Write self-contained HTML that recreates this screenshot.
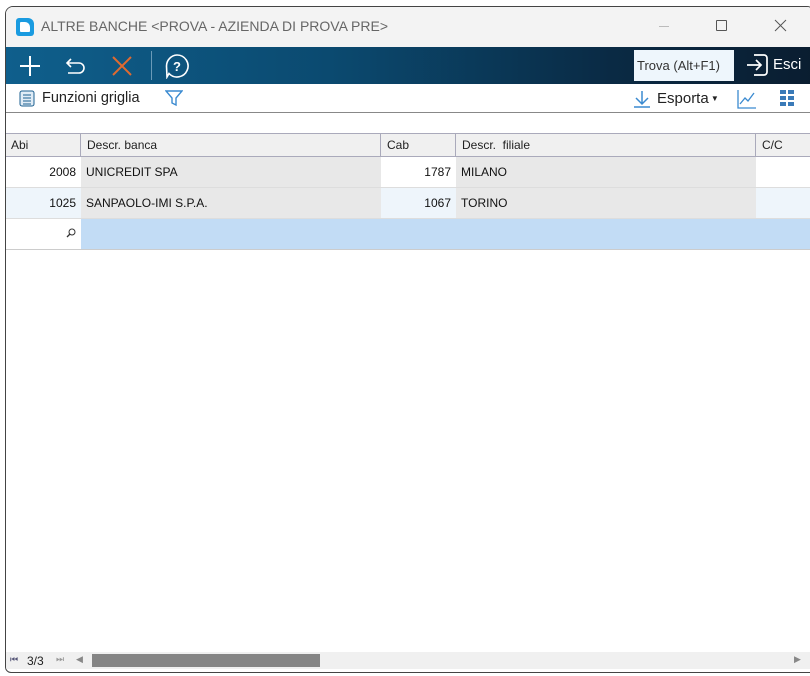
<!DOCTYPE html>
<html><head><style>
*{margin:0;padding:0;box-sizing:border-box}
body{width:810px;height:676px;background:#fff;position:relative;overflow:hidden;font-family:"Liberation Sans",Tahoma,sans-serif}
.win{position:absolute;left:5px;top:6px;width:810px;height:667px;border:1px solid #444;border-radius:8px 8px 0 6px;background:#fff;overflow:hidden}
.title{position:absolute;left:0;top:0;width:100%;height:40px;background:#f3f3f3}
.title .t{position:absolute;left:35px;top:11px;font-size:14px;color:#666}
.logo{position:absolute;left:10px;top:11px;width:18px;height:18px;background:#1a9be0;border-radius:3px 6px 3px 3px}
.logo:after{content:"";position:absolute;left:4px;top:4px;width:10px;height:10px;background:#fff;border-radius:1px 5px 1px 1px}
.tb{position:absolute;left:0;top:40px;width:100%;height:37px;background:linear-gradient(90deg,#0f5f8c 0%,#0b4a70 40%,#0a2a44 75%,#0a1d30 100%)}
.tb2{position:absolute;left:0;top:77px;width:100%;height:29px;border-bottom:1px solid #888;font-size:14.5px;color:#222}
.grid{position:absolute;left:-1px;top:126px;width:101%}
.hdr{height:24px;background:#f0f0f0;border-top:1px solid #aab;border-bottom:1px solid #aab;position:relative;font-size:12px;color:#222}
.c{position:absolute;top:0;height:100%;padding:0 5px;line-height:22px;white-space:nowrap;overflow:hidden}
.hdr .c{border-right:1px solid #aab;padding-left:6px}
.row{height:31px;position:relative;font-size:12px;color:#111;border-bottom:1px solid #ddd}
.row .c{line-height:30px}
.r{text-align:right}
.g{background:#e8e8e8}
.sb{position:absolute;left:0;top:645px;width:100%;height:17px;background:#f0f0f0;font-size:12px}
</style></head><body>
<div class="win">
 <div class="title"><div class="logo"></div><div class="t">ALTRE BANCHE &lt;PROVA - AZIENDA DI PROVA PRE&gt;</div>
  <div style="position:absolute;left:653px;top:19px;width:10px;height:1px;background:#bbb"></div>
  <div style="position:absolute;left:710px;top:13px;width:11px;height:11px;border:1px solid #555;border-radius:1px"></div>
  <svg style="position:absolute;left:768px;top:12px" width="13" height="13"><path d="M1 1L12 12M12 1L1 12" stroke="#555" stroke-width="1"/></svg>
 </div>
 <div class="tb">
  <svg style="position:absolute;left:12px;top:7px" width="24" height="24"><path d="M12 2V22M2 12H22" stroke="#fff" stroke-width="2"/></svg>
  <svg style="position:absolute;left:58px;top:8px" width="24" height="22"><path d="M7 4L3 8L7 12M3 8H15a5 5 0 0 1 0 10H4" stroke="#fff" stroke-width="1.6" fill="none"/></svg>
  <svg style="position:absolute;left:104px;top:7px" width="24" height="24"><path d="M3 3L21 21M21 3L3 21" stroke="#e06a30" stroke-width="2"/></svg>
  <div style="position:absolute;left:145px;top:4px;width:1px;height:29px;background:#6a9ab8"></div>
  <svg style="position:absolute;left:158px;top:6px" width="26" height="26"><path d="M13 2a11 11 0 1 1 -8 18.5L3 24L2.5 13A11 11 0 0 1 13 2Z" stroke="#fff" stroke-width="1.6" fill="none"/><text x="13" y="18" text-anchor="middle" fill="#fff" font-size="13" font-weight="bold" font-family="Liberation Sans">?</text></svg>
  <div style="position:absolute;left:628px;top:3px;width:100px;height:31px;background:#eef6fc;font-size:13px;color:#333;line-height:31px;padding-left:3px">Trova (Alt+F1)</div>
  <svg style="position:absolute;left:739px;top:6px" width="24" height="24"><path d="M9 2H19a3 3 0 0 1 3 3V19a3 3 0 0 1 -3 3H9M2 12H16M11 7L16 12L11 17" stroke="#fff" stroke-width="1.7" fill="none"/></svg>
  <div style="position:absolute;left:767px;top:9px;color:#fff;font-size:15px">Esci</div>
 </div>
 <div class="tb2">
  <svg style="position:absolute;left:13px;top:6px" width="16" height="17"><rect x="1" y="1" width="14" height="15" rx="2" fill="#e0ecf6" stroke="#1b5f90"/><path d="M4 5H12M4 8H12M4 11H12M4 14H12" stroke="#1b5f90"/></svg>
  <div style="position:absolute;left:36px;top:6px">Funzioni griglia</div>
  <svg style="position:absolute;left:159px;top:6px" width="18" height="17"><path d="M1 1H17L11 8V15L7 13V8Z" fill="none" stroke="#3a8ad0" stroke-width="1.4"/></svg>
  <svg style="position:absolute;left:627px;top:6px" width="18" height="18"><path d="M9 1V13M3 8L9 14L15 8M1 17H17" stroke="#3a8ad0" stroke-width="1.5" fill="none"/></svg>
  <div style="position:absolute;left:651px;top:6px;font-size:15px">Esporta<span style="font-size:8px;vertical-align:2px"> ▼</span></div>
  <svg style="position:absolute;left:731px;top:5px" width="20" height="20"><path d="M1 1V19H19M3 15L8 9L11 12L17 4" stroke="#3a8ad0" stroke-width="1.3" fill="none"/></svg>
  <svg style="position:absolute;left:774px;top:6px" width="14" height="16"><g fill="#3a7ab8"><rect x="0" y="0" width="6" height="4"/><rect x="8" y="0" width="6" height="4"/><rect x="0" y="6" width="6" height="4"/><rect x="8" y="6" width="6" height="4"/><rect x="0" y="12" width="6" height="4"/><rect x="8" y="12" width="6" height="4"/></g></svg>
 </div>
 <div class="grid">
  <div class="hdr">
   <div class="c" style="left:0;width:76px">Abi</div>
   <div class="c" style="left:76px;width:300px">Descr. banca</div>
   <div class="c" style="left:376px;width:75px">Cab</div>
   <div class="c" style="left:451px;width:300px">Descr.&nbsp; filiale</div>
   <div class="c" style="left:751px;width:60px">C/C</div>
  </div>
  <div class="row">
   <div class="c r" style="left:0;width:76px">2008</div>
   <div class="c g" style="left:76px;width:300px">UNICREDIT SPA</div>
   <div class="c r" style="left:376px;width:75px">1787</div>
   <div class="c g" style="left:451px;width:300px">MILANO</div>
  </div>
  <div class="row" style="background:#eef5fb">
   <div class="c r" style="left:0;width:76px">1025</div>
   <div class="c g" style="left:76px;width:300px">SANPAOLO-IMI S.P.A.</div>
   <div class="c r" style="left:376px;width:75px">1067</div>
   <div class="c g" style="left:451px;width:300px">TORINO</div>
  </div>
  <div class="row" style="background:#c2dcf5;border-bottom:1px solid #ccc">
   <div class="c r" style="left:0;width:76px;background:#fff"><svg width="10" height="10"><circle cx="6" cy="4" r="3" fill="none" stroke="#333"/><path d="M4 6L1 9" stroke="#333" stroke-width="1.3"/></svg></div>
  </div>
 </div>
 <div class="sb">
  <div style="position:absolute;left:4px;top:2px;font-size:9px;color:#557">⏮</div>
  <div style="position:absolute;left:21px;top:2px;color:#222">3/3</div>
  <div style="position:absolute;left:50px;top:2px;font-size:9px;color:#999">⏭</div>
  <div style="position:absolute;left:70px;top:2px;font-size:9px;color:#888">◀</div>
  <div style="position:absolute;left:86px;top:2px;width:228px;height:13px;background:#858585"></div>
  <div style="position:absolute;left:788px;top:2px;font-size:9px;color:#888">▶</div>
 </div>
</div>
</body></html>
